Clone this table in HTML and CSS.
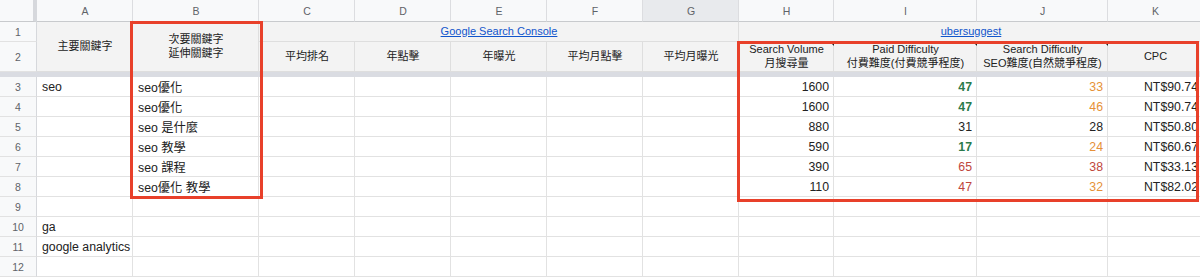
FILE: index.html
```html
<!DOCTYPE html>
<html lang="zh-Hant">
<head>
<meta charset="utf-8">
<title>Keywords</title>
<link rel="stylesheet" href="styles.css">
</head>
<body>
<div class="sheet">
  <div class="c corner"></div>
  <div class="c colh">A</div>
  <div class="c colh">B</div>
  <div class="c colh">C</div>
  <div class="c colh">D</div>
  <div class="c colh">E</div>
  <div class="c colh">F</div>
  <div class="c colh colh-active">G</div>
  <div class="c colh">H</div>
  <div class="c colh">I</div>
  <div class="c colh">J</div>
  <div class="c colh">K</div>

  <div class="c rowh">1</div>
  <div class="c hd span-r2">主要關鍵字</div>
  <div class="c hd span-r2">次要關鍵字<br>延伸關鍵字</div>
  <div class="c hd span-c5"><a class="link" href="#">Google Search Console</a></div>
  <div class="c hd span-c4"><a class="link" href="#">ubersuggest</a></div>

  <div class="c rowh">2</div>
  <div class="c hd">平均排名</div>
  <div class="c hd">年點擊</div>
  <div class="c hd">年曝光</div>
  <div class="c hd">平均月點擊</div>
  <div class="c hd">平均月曝光</div>
  <div class="c hd note">Search Volume<br>月搜尋量</div>
  <div class="c hd note">Paid Difficulty<br>付費難度(付費競爭程度)</div>
  <div class="c hd note">Search Difficulty<br>SEO難度(自然競爭程度)</div>
  <div class="c hd">CPC</div>

  <div class="freeze"></div>

  <div class="c rowh">3</div>
  <div class="c">seo</div><div class="c">seo優化</div>
  <div class="c"></div><div class="c"></div><div class="c"></div><div class="c"></div><div class="c"></div>
  <div class="c num">1600</div><div class="c num green">47</div><div class="c num orange">33</div><div class="c num">NT$90.74</div>

  <div class="c rowh">4</div>
  <div class="c"></div><div class="c">seo優化</div>
  <div class="c"></div><div class="c"></div><div class="c"></div><div class="c"></div><div class="c"></div>
  <div class="c num">1600</div><div class="c num green">47</div><div class="c num orange">46</div><div class="c num">NT$90.74</div>

  <div class="c rowh">5</div>
  <div class="c"></div><div class="c">seo 是什麼</div>
  <div class="c"></div><div class="c"></div><div class="c"></div><div class="c"></div><div class="c"></div>
  <div class="c num">880</div><div class="c num">31</div><div class="c num">28</div><div class="c num">NT$50.80</div>

  <div class="c rowh">6</div>
  <div class="c"></div><div class="c">seo 教學</div>
  <div class="c"></div><div class="c"></div><div class="c"></div><div class="c"></div><div class="c"></div>
  <div class="c num">590</div><div class="c num green">17</div><div class="c num orange">24</div><div class="c num">NT$60.67</div>

  <div class="c rowh">7</div>
  <div class="c"></div><div class="c">seo 課程</div>
  <div class="c"></div><div class="c"></div><div class="c"></div><div class="c"></div><div class="c"></div>
  <div class="c num">390</div><div class="c num red">65</div><div class="c num red">38</div><div class="c num">NT$33.13</div>

  <div class="c rowh">8</div>
  <div class="c"></div><div class="c">seo優化 教學</div>
  <div class="c"></div><div class="c"></div><div class="c"></div><div class="c"></div><div class="c"></div>
  <div class="c num">110</div><div class="c num red">47</div><div class="c num orange">32</div><div class="c num">NT$82.02</div>

  <div class="c rowh">9</div>
  <div class="c"></div><div class="c"></div>
  <div class="c"></div><div class="c"></div><div class="c"></div><div class="c"></div><div class="c"></div>
  <div class="c"></div><div class="c"></div><div class="c"></div><div class="c"></div>

  <div class="c rowh">10</div>
  <div class="c">ga</div><div class="c"></div>
  <div class="c"></div><div class="c"></div><div class="c"></div><div class="c"></div><div class="c"></div>
  <div class="c"></div><div class="c"></div><div class="c"></div><div class="c"></div>

  <div class="c rowh">11</div>
  <div class="c">google analytics</div><div class="c"></div>
  <div class="c"></div><div class="c"></div><div class="c"></div><div class="c"></div><div class="c"></div>
  <div class="c"></div><div class="c"></div><div class="c"></div><div class="c"></div>

  <div class="c rowh">12</div>
  <div class="c"></div><div class="c"></div>
  <div class="c"></div><div class="c"></div><div class="c"></div><div class="c"></div><div class="c"></div>
  <div class="c"></div><div class="c"></div><div class="c"></div><div class="c"></div>

  <div class="highlight highlight-b"></div>
  <div class="highlight highlight-uber"></div>
</div>
</body>
</html>
```

FILE: styles.css
```css
html, body {
  margin: 0;
  padding: 0;
  background: #ffffff;
  overflow: hidden;
}

body {
  font-family: "Liberation Sans", "Noto Sans CJK TC", sans-serif;
}

.sheet {
  position: relative;
  display: grid;
  grid-template-columns: 37px 96px 126px 96px 96px 96px 96px 96px 95px 143px 131px 95px;
  grid-template-rows: 22px 20px 30px 5px repeat(10, 20px);
  width: 1203px;
}

.c {
  box-sizing: border-box;
  border-right: 1px solid #e2e2e2;
  border-bottom: 1px solid #e2e2e2;
  padding: 0 4px 0 5px;
  display: flex;
  align-items: center;
  font-size: 12.3px;
  color: #222222;
  white-space: nowrap;
  overflow: hidden;
}

.num {
  justify-content: flex-end;
  padding-right: 4px;
}

.green {
  color: #2b7a4b;
  font-weight: bold;
}

.orange {
  color: #e69138;
}

.red {
  color: #c0463c;
}

.corner {
  background: #f8f9fa;
  border-right: 4px solid #d6d8dc;
  border-bottom: 1px solid #c8cacd;
}

.colh {
  background: #f8f9fa;
  color: #5f6368;
  font-size: 10.5px;
  justify-content: center;
  border-right-color: #dcdde0;
  border-bottom-color: #c8cacd;
}

.colh-active {
  background: #e8eaed;
}

.rowh {
  background: #f8f9fa;
  color: #5f6368;
  font-size: 10.5px;
  justify-content: center;
  padding: 0;
  border-right-color: #d6d8dc;
}

.hd {
  background: #f3f3f3;
  font-size: 11px;
  line-height: 13.5px;
  justify-content: center;
  text-align: center;
  color: #222222;
  border-right-color: #dedede;
  border-bottom-color: #dedede;
}

.span-r2 {
  grid-row: span 2;
}

.span-c5 {
  grid-column: span 5;
}

.span-c4 {
  grid-column: span 4;
}

.link {
  color: #1155cc;
  text-decoration: underline;
  font-size: 11px;
}

.note {
  position: relative;
  overflow: visible;
}

.note::after {
  content: "";
  position: absolute;
  top: 0;
  right: -1px;
  width: 0;
  height: 0;
  border-top: 4px solid #222222;
  border-left: 4px solid transparent;
}

.freeze {
  grid-column: 1 / -1;
  background: #dadce2;
}

.highlight {
  position: absolute;
  box-sizing: border-box;
  border: 3px solid #e8402a;
  pointer-events: none;
}

.highlight-b {
  left: 130px;
  top: 21px;
  width: 133px;
  height: 178px;
}

.highlight-uber {
  left: 737px;
  top: 41px;
  width: 462px;
  height: 161px;
}
```
